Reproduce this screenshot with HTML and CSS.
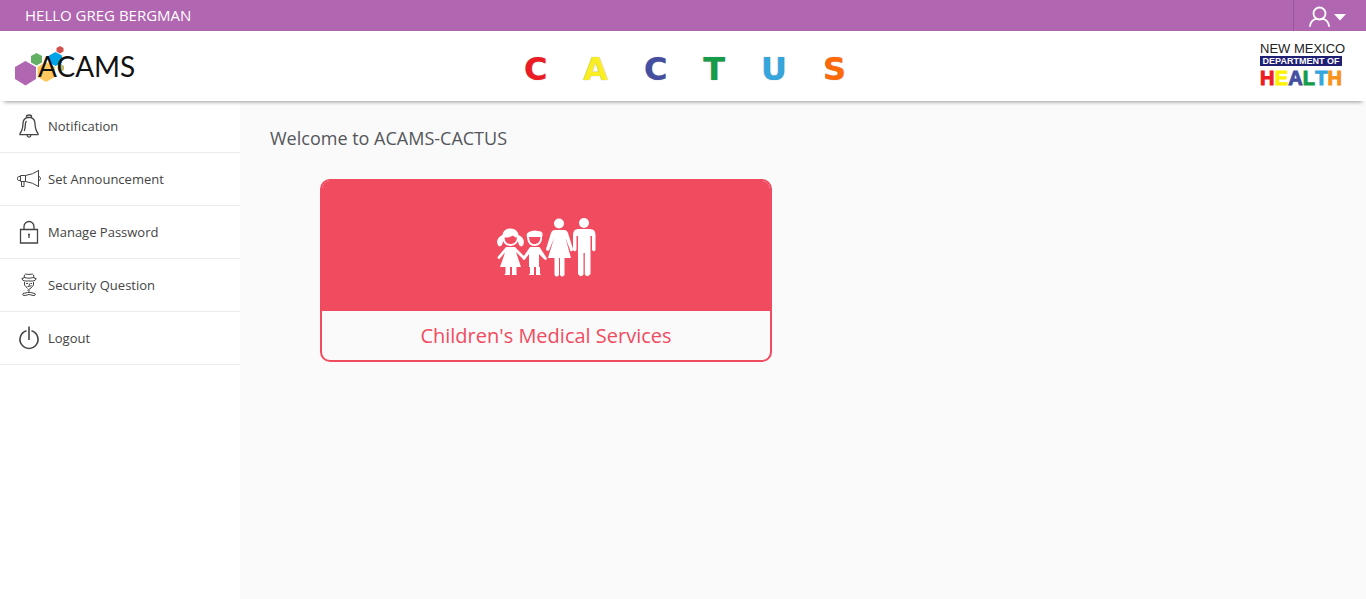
FILE: index.html
```html
<!DOCTYPE html>
<html lang="en">
<head>
<meta charset="utf-8">
<meta name="viewport" content="width=device-width, initial-scale=1">
<title>ACAMS-CACTUS</title>
<link rel="stylesheet" href="styles.css">
</head>
<body>
<div class="topbar">
  <span class="greeting">HELLO GREG BERGMAN</span>
  <button class="user-menu" type="button" aria-label="User menu">
    <svg width="40" height="22" viewBox="0 0 40 22" fill="none" stroke="#fff" stroke-width="1.8" stroke-linecap="round">
      <circle cx="12.500" cy="7.500" r="6"/>
      <path d="M3 20C3.500 16 6 13.500 9 12.800M16 12.800C19 13.500 21.500 16 22 20"/>
      <path d="M27 8H39L33 14.500Z" fill="#fff" stroke="none"/>
    </svg>
  </button>
</div>
<header class="header">
  <a class="acams" href="#">
    <svg class="acams-mark" width="50" height="40" viewBox="0 0 50 40" aria-hidden="true">
      <path fill="#b066b0" d="M10.500 15L21 21V33L10.500 39.500L0 33V21Z"/>
      <path fill="#64af64" d="M21.500 7L27 10V16.500L21.500 19.500L16 16.500V10Z"/>
      <path fill="#ffc85f" d="M31 16L40 21V31L31 36L22.500 31V21Z"/>
      <path fill="#00a2e8" d="M40.500 6L47 9.500V16.500L40.500 20L34 16.500V9.500Z"/>
      <path fill="#d2504b" d="M45 0L48.500 2V5.500L45 7.500L41.500 5.500V2Z"/>
      <path fill="#c8b96e" d="M46 18L49 20V24L46 25.500L43 24V20Z"/>
    </svg>
    <span class="acams-name">ACAMS</span>
  </a>
  <div class="cactus"><span class="red">C</span><span class="yellow">A</span><span class="indigo">C</span><span class="green">T</span><span class="sky">U</span><span class="orange">S</span></div>
  <div class="doh">
    <span class="doh-state">NEW MEXICO</span>
    <span class="doh-dept">DEPARTMENT OF</span>
    <span class="doh-health"><span class="red">H</span><span class="lemon">E</span><span class="indigo">A</span><span class="green">L</span><span class="sky">T</span><span class="amber">H</span></span>
  </div>
</header>
<div class="layout">
  <nav class="sidebar">
    <a class="item" href="#">
      <svg class="icon" viewBox="0 0 24 24"><path d="M9.500 4V2.500Q9.500 1 12 1T14.500 2.500V4M9.500 3.500H14.500M9.500 4C7 4.500 6.200 6.500 6 9.500C5.800 14 5 17 3 19.500V20.700H21V19.500C19 17 18.200 14 18 9.500C17.800 6.500 17 4.500 14.500 4M10 21Q10.300 23.200 12 23.200T14 21M9.500 7Q8.300 8 8.300 11T7.300 17"/></svg>
      Notification
    </a>
    <a class="item" href="#">
      <svg class="icon thin" viewBox="0 0 24 24"><path d="M3.500 8.500H8.500V14.500H3.500ZM3.500 9.500H1.500Q.5 9.500 .5 11.500T1.500 13.500H3.500M8.500 8.500Q16 7.500 21.500 3.500M8.500 14.500Q16 15.500 21.500 19.500M21.500 3V20M4.500 15V19.500H7V15M22 9.500Q23.500 10 23.500 11.500T22 13.500"/></svg>
      Set Announcement
    </a>
    <a class="item" href="#">
      <svg class="icon" viewBox="0 0 24 24"><path d="M3.500 9.500H20.500V23H3.500ZM7 9.500V6.500A5 5 0 0 1 17 6.500V9.500M12 15V18M11 14.500H13"/></svg>
      Manage Password
    </a>
    <a class="item" href="#">
      <svg class="icon thin" viewBox="0 0 24 24"><path d="M7 5L7.500 2Q8 .8 10 1.200Q12 1.700 14 1.200Q16 .8 16.500 2L17 5M7 4.500Q12 6 17 4.500M7 5L4.800 5.500Q5.500 8 8 8H16Q18.500 8 19.200 5.500L17 5M7.500 9V12L10.500 15.500M16.500 9V12L14 15L10.500 17.500M9 10.500H11M13.500 10.500H15M12.500 10.500L12 13.500H10.500M14.500 12L12.500 14M12 17V20M10.500 19.500L6 20.500Q5 22 7 22.700L12 21.500L17 22.700Q19 22 18 20.500L13.500 19.500Z"/></svg>
      Security Question
    </a>
    <a class="item" href="#">
      <svg class="icon power" viewBox="0 0 24 24"><path d="M9.500 4.800A9 9 0 1 0 14.500 4.800M12 .5V14"/></svg>
      Logout
    </a>
  </nav>
  <main class="content">
    <h1 class="title">Welcome to ACAMS-CACTUS</h1>
    <div class="cards">
      <a class="card" href="#">
        <span class="card-art">
          <svg width="100" height="60" viewBox="0 0 100 60" fill="#fff" aria-hidden="true">
            <!-- girl -->
            <path fill-rule="evenodd" d="M14.500 10.500C9.500 10.500 7 13.500 6.500 17Q1.500 19 1 24Q1.200 27 3.500 28.500Q6.500 28 7 23Q9 27.500 14.500 28Q20 27.500 22 23Q22.500 28 25.500 28.500Q28 27 28 24Q27.500 19 22.500 17C22 13.500 19.500 10.500 14.500 10.500ZM8.500 19.500C12 20 15.500 18.500 17 17.500C18 19 20 19.500 21 19.500C20.500 24 18 26 14.500 26S9 24 8.500 19.500Z"/>
            <path d="M10 29H19L28 38Q28.500 40 26.500 40.500L20 34L25 49H20.500V57H16V49H14V57H9.500V49H4L9 34.500L3.500 41Q1.500 41.500 1.500 39ZM9 55.500H13.500V57H8.500ZM16 55.500H20L21 57H16Z"/>
            <!-- boy -->
            <path fill-rule="evenodd" d="M31 19C29.500 15 33 13 39 12.500L45 13.500Q47.500 15 46 19.500C46 25 43 28 38.500 28S31.500 25 31 19ZM33 19H44.500C44 24 42 26 38.500 26S33.500 24 33 19Z"/>
            <path d="M34 29H43.500L51 40.500Q50.500 42.500 48.500 41.500L43 36V49H44V55.500L45 57H40V49H38V57H32.500L34 55.500V49H33V36L28.500 42Q26.500 42.500 26.500 40Z"/>
            <!-- woman -->
            <circle cx="63" cy="5.500" r="5"/>
            <path d="M59 12H68Q71 12 72 15L77 31Q77 34 74.500 33L69.500 20L75 40H68.500V57Q66 60 64 57V40H63V57Q60.500 60 58.500 57V40H52L58 20L53 32.500Q50 33.500 50 31L55 15Q56 12 59 12Z"/>
            <!-- man -->
            <circle cx="88" cy="5" r="5"/>
            <path d="M82 11H94Q99.500 11 99.500 17V32Q98 34.500 96 32V18H94.500V56Q91.500 60 88.800 56.500V35H87.500V56.500Q84.500 60 82 56V18H80.500V32Q78.500 34.500 77 32V17Q77 11 82 11Z"/>
          </svg>
        </span>
        <span class="card-label">Children's Medical Services</span>
      </a>
    </div>
  </main>
</div>
</body>
</html>
```
FILE: styles.css
```css
* { box-sizing: border-box; }

body {
  margin: 0;
  min-height: 100vh;
  display: flex;
  flex-direction: column;
  background: #fafafa;
  color: #444;
  font-family: "Open Sans", sans-serif;
}

a { color: inherit; text-decoration: none; }

.topbar {
  display: flex;
  justify-content: space-between;
  height: 31px;
  padding-left: 25px;
  background: #b066b0;
  color: #fff;
}

.greeting { font-size: 15px; line-height: 31px; }

.user-menu {
  display: flex;
  align-items: center;
  width: 73px;
  padding: 2px 0 0 13px;
  border: 0;
  border-left: 1px solid #9a539c;
  background: none;
}

.header {
  position: relative;
  display: grid;
  grid-template-columns: 1fr 326px 1fr;
  align-items: center;
  height: 70px;
  background: #fff;
  box-shadow: 0 5px 4px -4px rgba(0, 0, 0, .4);
}

.acams { display: flex; align-items: center; padding-left: 15px; color: #111; }
.acams-name {
  margin-left: -27px;
  font: 28px/36px Lato, sans-serif;
}

.cactus {
  display: flex;
  justify-content: space-between;
  padding: 6px 0 0 4px;
  font: bold 32px/36px "DejaVu Sans", sans-serif;
}
.cactus span { text-shadow: 0 0 1px #999; }

.doh {
  justify-self: end;
  width: 82px;
  margin-right: 24px;
  text-align: center;
  white-space: nowrap;
}
.doh-state, .doh-dept { display: block; }
.doh-state {
  color: #222;
  font: 13px/15px "Liberation Sans", sans-serif;
}
.doh-dept {
  background: #1f1f73;
  color: #fff;
  font: bold 9px/10px "Liberation Sans", sans-serif;
}
.doh-health {
  display: flex;
  justify-content: space-between;
  font: bold 20px/25px "Liberation Sans", sans-serif;
  -webkit-text-stroke: 1px currentColor;
}

.red { color: #ed1c24; }
.yellow { color: #f9ed23; }
.lemon { color: #fff200; }
.indigo { color: #444fa2; }
.green { color: #169b48; }
.sky { color: #34a5dd; }
.orange { color: #ff6908; }
.amber { color: #f7941d; }

.layout { display: flex; flex: 1; }

.sidebar { width: 240px; background: #fff; }
.item {
  display: flex;
  align-items: center;
  gap: 7px;
  height: 53px;
  padding-left: 17px;
  border-bottom: 1px solid #ebebeb;
  font-size: 13px;
}
.item:first-child { height: 52px; padding-bottom: 2px; }
.icon {
  width: 24px;
  height: 24px;
  fill: none;
  stroke: #444;
  stroke-width: 1.3;
}
.thin { stroke-width: 1; }
.power { stroke-width: 1.6; }

.content { flex: 1; padding: 25px 30px; }
.title {
  margin: 0;
  color: #54565b;
  font-size: 18px;
  font-weight: 400;
  line-height: 25px;
}
.cards {
  display: grid;
  grid-template-columns: repeat(2, 1fr);
  gap: 62px;
  padding: 28px 50px;
}
.card {
  overflow: hidden;
  border: 2px solid #f14b5f;
  border-radius: 10px;
  color: #f14b5f;
}
.card-art {
  display: flex;
  align-items: center;
  justify-content: center;
  height: 130px;
  padding-top: 3px;
  background: #f14b5f;
}
.card-label {
  display: block;
  font-size: 20px;
  line-height: 49px;
  text-align: center;
}
```
